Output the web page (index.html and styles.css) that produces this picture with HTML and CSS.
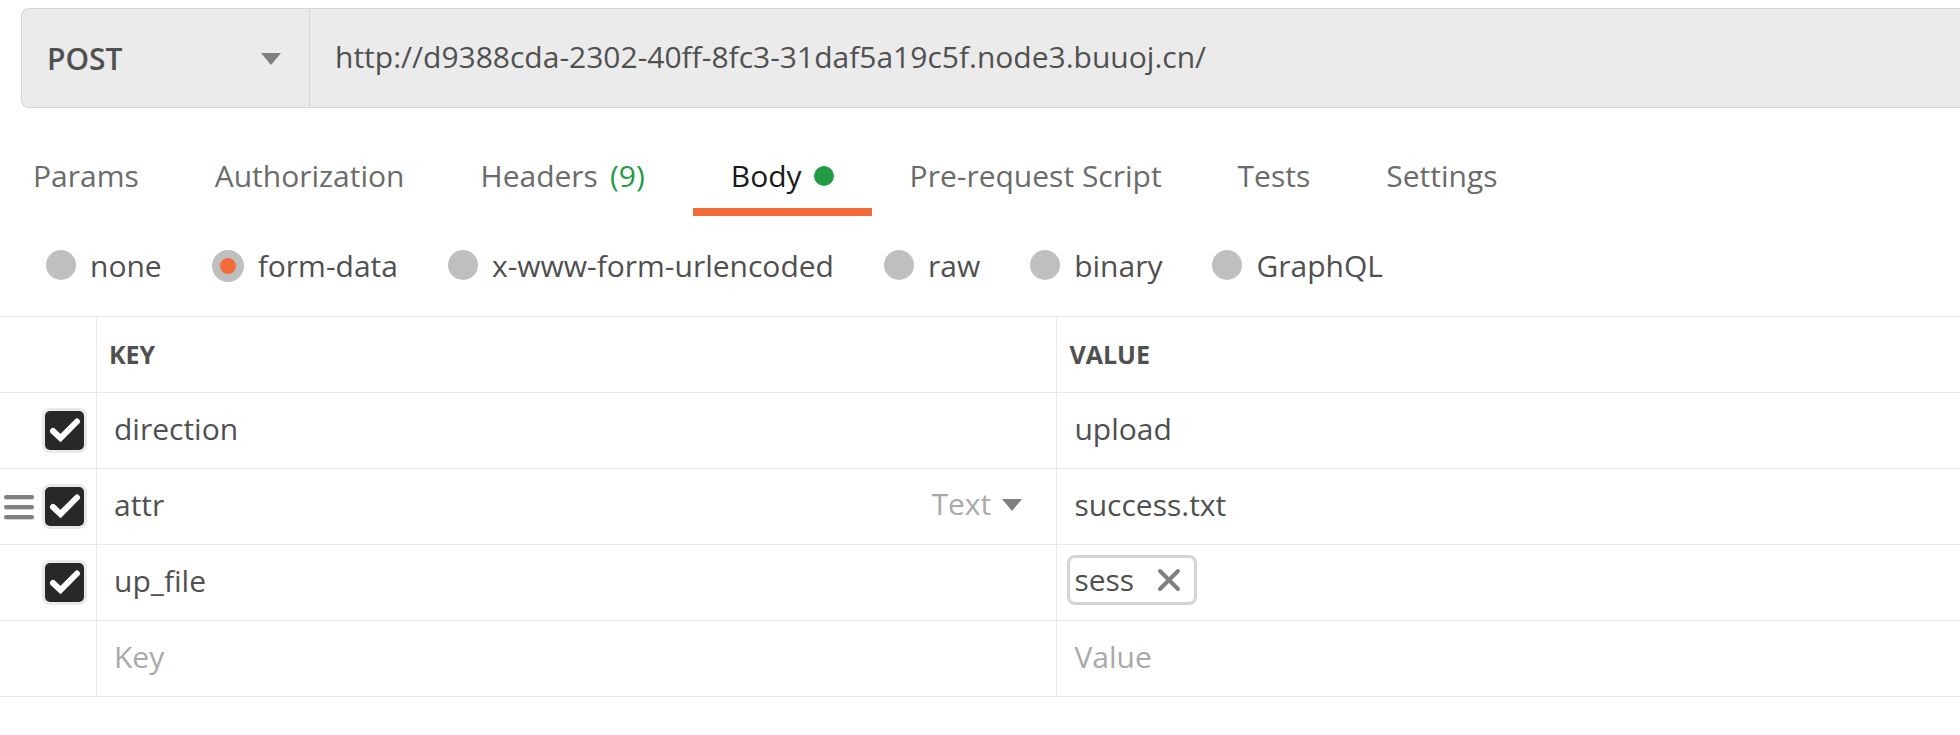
FILE: index.html
```html
<!DOCTYPE html>
<html lang="en">
<head>
<meta charset="utf-8">
<title>Request builder</title>
<link rel="stylesheet" href="styles.css">
</head>
<body>
<form class="request">
  <div class="url-bar">
    <div class="dropdown method">
      <select class="dropdown-select method-select" aria-label="Method"><option>POST</option></select>
      <svg class="caret" viewBox="0 0 20 12" aria-hidden="true"><path d="M0 0H20L10 12Z"/></svg>
    </div>
    <input class="url-input" type="text" aria-label="Request URL" spellcheck="false" value="http://d9388cda-2302-40ff-8fc3-31daf5a19c5f.node3.buuoj.cn/">
  </div>

  <nav class="tabs">
    <button type="button" class="tab">Params</button>
    <button type="button" class="tab">Authorization</button>
    <button type="button" class="tab tab-counted">Headers<span class="count">(9)</span></button>
    <button type="button" class="tab tab-active">Body<span class="dot"></span></button>
    <button type="button" class="tab">Pre-request Script</button>
    <button type="button" class="tab">Tests</button>
    <button type="button" class="tab">Settings</button>
  </nav>

  <div class="modes">
    <label class="mode"><input class="radio" type="radio" name="mode">none</label>
    <label class="mode"><input class="radio" type="radio" name="mode" checked>form-data</label>
    <label class="mode"><input class="radio" type="radio" name="mode">x-www-form-urlencoded</label>
    <label class="mode"><input class="radio" type="radio" name="mode">raw</label>
    <label class="mode"><input class="radio" type="radio" name="mode">binary</label>
    <label class="mode"><input class="radio" type="radio" name="mode">GraphQL</label>
  </div>

  <table class="fields">
    <colgroup><col class="col-tools"><col class="col-key"><col></colgroup>
    <thead>
      <tr><th></th><th>KEY</th><th>VALUE</th></tr>
    </thead>
    <tbody>
      <tr>
        <td><div class="tools"><span class="check"><input class="check-box" type="checkbox" aria-label="Include direction" checked><svg class="check-mark" viewBox="0 0 39 39" aria-hidden="true"><path d="M8 20L15.500 27L32 10.500"/></svg></span></div></td>
        <td><div class="cell"><input class="field" type="text" aria-label="Key" value="direction"></div></td>
        <td><div class="cell"><input class="field" type="text" aria-label="Value" value="upload"></div></td>
      </tr>
      <tr>
        <td><div class="tools"><svg class="grip" viewBox="0 0 30 26" aria-hidden="true"><path class="grip-shade" d="M2 4H28M2 14H28M2 24H28"/><path class="grip-line" d="M2 3H28M2 13H28M2 23H28"/></svg><span class="check"><input class="check-box" type="checkbox" aria-label="Include attr" checked><svg class="check-mark" viewBox="0 0 39 39" aria-hidden="true"><path d="M8 20L15.500 27L32 10.500"/></svg></span></div></td>
        <td><div class="cell"><input class="field" type="text" aria-label="Key" value="attr">
          <div class="dropdown type">
            <select class="dropdown-select type-select" aria-label="Type"><option>Text</option></select>
            <svg class="caret" viewBox="0 0 20 12" aria-hidden="true"><path d="M0 0H20L10 12Z"/></svg>
          </div></div></td>
        <td><div class="cell"><input class="field" type="text" aria-label="Value" value="success.txt"></div></td>
      </tr>
      <tr>
        <td><div class="tools"><span class="check"><input class="check-box" type="checkbox" aria-label="Include up_file" checked><svg class="check-mark" viewBox="0 0 39 39" aria-hidden="true"><path d="M8 20L15.500 27L32 10.500"/></svg></span></div></td>
        <td><div class="cell"><input class="field" type="text" aria-label="Key" value="up_file"></div></td>
        <td><div class="cell cell-file"><span class="chip">sess<button type="button" class="chip-remove" aria-label="Remove sess"><svg class="cross" viewBox="0 0 24 24" aria-hidden="true"><path d="M3 3L21 21M21 3L3 21"/></svg></button></span></div></td>
      </tr>
      <tr>
        <td></td>
        <td><div class="cell"><input class="field" type="text" aria-label="New key" placeholder="Key"></div></td>
        <td><div class="cell"><input class="field" type="text" aria-label="New value" placeholder="Value"></div></td>
      </tr>
    </tbody>
  </table>
</form>
</body>
</html>
```
FILE: styles.css
```css
* {
  box-sizing: border-box;
}

body {
  margin: 0;
  background: #fff;
  color: #505050;
  font: 30px/40px "Open Sans", "Noto Sans", sans-serif;
}

input,
select,
button {
  margin: 0;
  padding: 0;
  border: 0;
  background: none;
  color: inherit;
  font: inherit;
}

.request {
  padding-top: 8px;
}

/* URL bar */
.url-bar {
  display: flex;
  height: 100px;
  margin-left: 21px;
  background: #ebebeb;
  border: 1px solid #d4d4d4;
  border-right: 0;
  border-radius: 8px 0 0 8px;
}

.dropdown {
  display: grid;
  align-items: center;
}

.dropdown-select,
.dropdown .caret {
  grid-area: 1 / 1;
}

.dropdown-select {
  appearance: none;
}

.caret {
  justify-self: end;
  width: 20px;
  height: 12px;
  fill: #808080;
  pointer-events: none;
}

.method {
  width: 288px;
  padding: 2px 28px 0 25px;
  border-right: 1px solid #d4d4d4;
}

.method-select {
  width: 100%;
  font-weight: 600;
}

.url-input {
  flex: 1;
  min-width: 0;
  padding: 0 25px 2px;
}

/* Tabs */
.tabs {
  display: flex;
  margin-top: 48px;
}

.tab {
  display: flex;
  align-items: center;
  padding: 0 38px 12px;
  border-bottom: 8px solid transparent;
  color: #6b6b6b;
  white-space: nowrap;
}

.tab:first-child {
  padding-left: 33px;
}

.tab-counted {
  margin-right: 10px;
}

.tab-active {
  border-bottom-color: #f26b3a;
  color: #1a1a1a;
}

.count {
  margin-left: 12px;
  color: #249c47;
}

.dot {
  width: 20px;
  height: 20px;
  margin-left: 12px;
  border-radius: 50%;
  background: #249c47;
}

/* Body modes */
.modes {
  display: flex;
  gap: 50px;
  padding: 30px 46px;
}

.mode {
  display: flex;
  align-items: center;
  gap: 14px;
  white-space: nowrap;
}

.radio {
  appearance: none;
  width: 30px;
  height: 30px;
  margin-bottom: 2px;
  border-radius: 50%;
  background: #bfbfbf;
}

.radio:checked {
  width: 32px;
  height: 32px;
  margin-bottom: 0;
  border: 8px solid #bfbfbf;
  background: #f26b3a;
}

/* Form fields */
.fields {
  width: 100%;
  table-layout: fixed;
  border-spacing: 0;
  border-top: 1px solid #e9e9e9;
}

.col-tools {
  width: 97px;
}

.col-key {
  width: 49%;
}

.fields th,
.fields td {
  height: 76px;
  padding: 0;
  border-right: 1px solid #e9e9e9;
  border-bottom: 1px solid #e9e9e9;
}

.fields th:last-child,
.fields td:last-child {
  border-right: 0;
}

.fields th {
  padding: 0 12px 2px;
  font-size: 25px;
  font-weight: 700;
  text-align: left;
}

.cell {
  display: flex;
  align-items: center;
  padding: 0 34px 4px 17px;
}

.field {
  flex: 1;
  min-width: 0;
}

.field::placeholder {
  color: #a9a9a9;
  opacity: 1;
}

.type-select {
  padding: 0 31px 2px 0;
  color: #a9a9a9;
}

.tools {
  display: flex;
  align-items: center;
  justify-content: flex-end;
  gap: 8px;
  padding-right: 9px;
}

.grip {
  width: 30px;
  height: 26px;
  fill: none;
  stroke-width: 4;
  stroke-linecap: round;
}

.grip-shade {
  stroke: #d4d4d4;
}

.grip-line {
  stroke: #808080;
}

.check {
  display: grid;
  place-items: center;
}

.check-box,
.check-mark {
  grid-area: 1 / 1;
}

.check-box {
  appearance: none;
  width: 45px;
  height: 45px;
  border: 3px solid #e9e9e9;
  border-radius: 8px;
  background: #282828;
}

.check-mark {
  width: 39px;
  height: 39px;
  fill: none;
  stroke: #fff;
  stroke-width: 6;
  stroke-linecap: round;
  pointer-events: none;
}

.cell-file {
  padding: 0 10px 6px;
}

.chip {
  display: flex;
  align-items: center;
  gap: 23px;
  padding: 2px 13px 2px 4px;
  border: 3px solid #d4d4d4;
  border-radius: 8px;
}

.chip-remove {
  display: flex;
}

.cross {
  width: 24px;
  height: 24px;
  fill: none;
  stroke: #808080;
  stroke-width: 4;
  stroke-linecap: round;
}
```
